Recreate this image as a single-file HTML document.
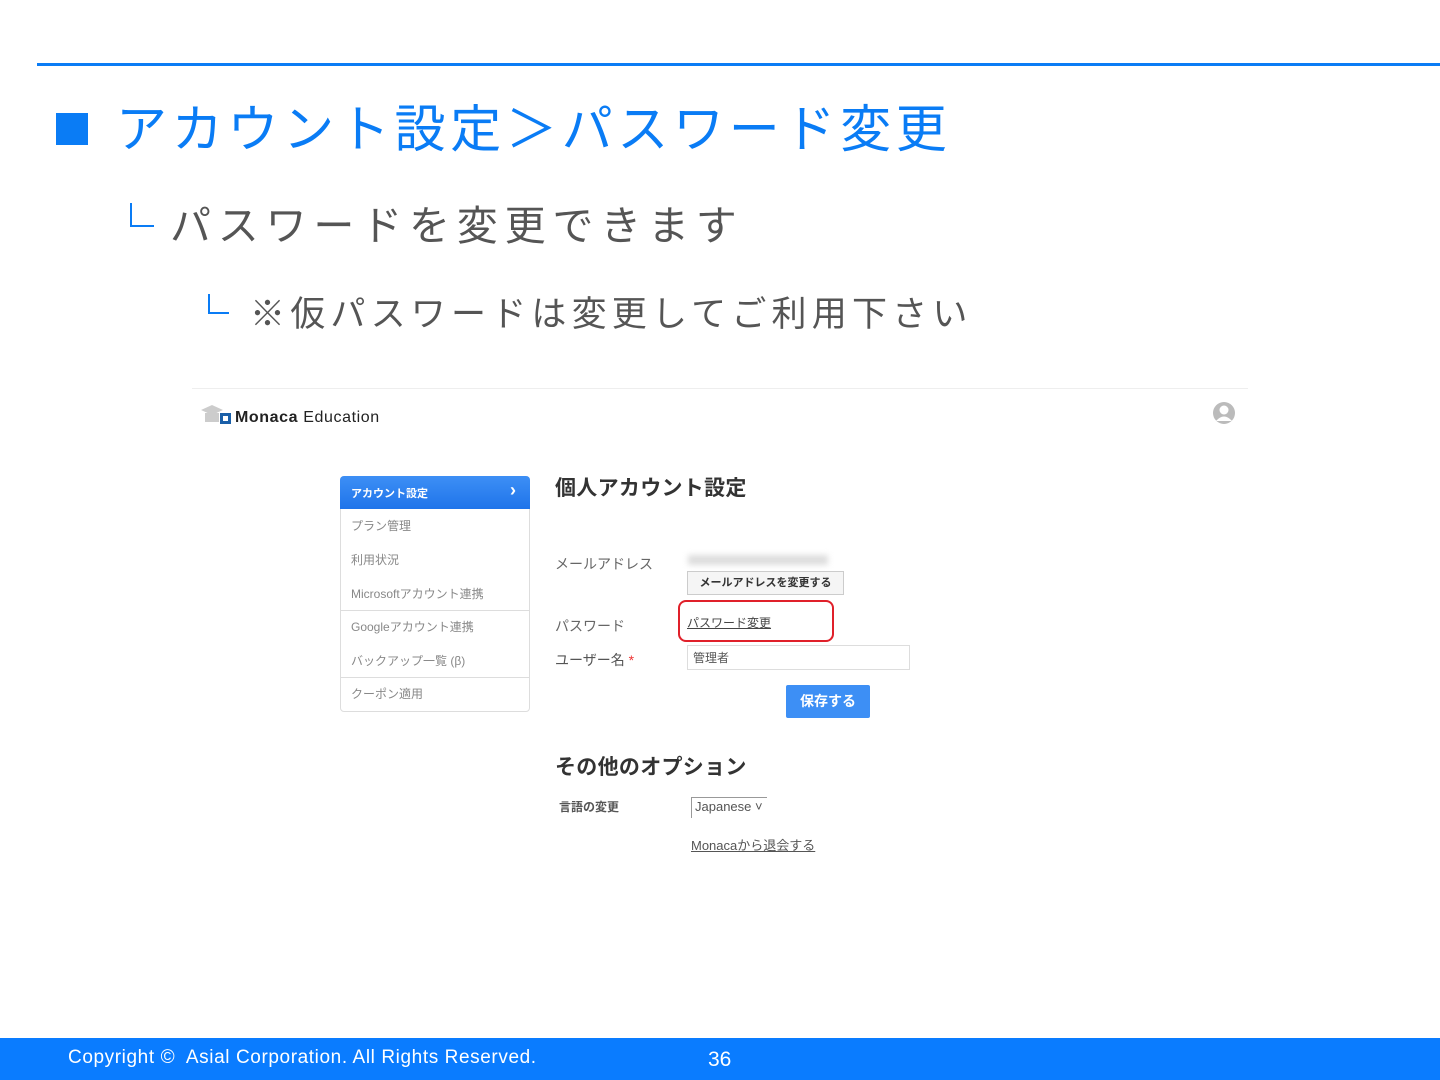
<!DOCTYPE html>
<html><head><meta charset="utf-8"><style>
*{margin:0;padding:0;box-sizing:border-box}
body{width:1440px;height:1080px;background:#fff;position:relative;overflow:hidden;font-family:"Liberation Sans","Noto Sans CJK JP",sans-serif}
.a{position:absolute;white-space:nowrap}
</style></head><body>
<div class="a" style="left:37px;top:63px;width:1403px;height:3px;background:#0a7cf5"></div>
<div class="a" style="left:56px;top:113px;width:32px;height:32px;background:#0a7cf5"></div>
<div class="a" style="left:116px;top:97px;font-size:51px;letter-spacing:4.7px;color:#0a7cf5;line-height:66px">アカウント設定＞パスワード変更</div>
<div class="a" style="left:130px;top:203px;width:24px;height:24px;border-left:2px solid #0a7cf5;border-bottom:2px solid #0a7cf5"></div>
<div class="a" style="left:170px;top:198px;font-size:41px;letter-spacing:6.8px;color:#555;line-height:56px">パスワードを変更できます</div>
<div class="a" style="left:208px;top:294px;width:21px;height:20px;border-left:2px solid #0a7cf5;border-bottom:2px solid #0a7cf5"></div>
<div class="a" style="left:250px;top:291px;font-size:35px;letter-spacing:5.2px;color:#555;line-height:48px">※仮パスワードは変更してご利用下さい</div>

<div class="a" style="left:192px;top:388px;width:1056px;height:608px;border-top:1px solid #eee"></div>
<svg class="a" style="left:200px;top:404px" width="32" height="22"><path d="M1 6 L12 1 L23 6 L12 11Z" fill="#ccc"/><rect x="5" y="9" width="14" height="9" fill="#ccc"/><rect x="20" y="9" width="11" height="11" fill="#1a5fa8"/><rect x="23" y="12" width="5" height="5" fill="#fff"/></svg>
<div class="a" style="left:235px;top:408px;font-size:16px;color:#222;line-height:20px;letter-spacing:0.6px"><b>Monaca</b> Education</div>
<svg class="a" style="left:1212px;top:401px" width="24" height="24"><circle cx="12" cy="12" r="11" fill="#bbb"/><circle cx="12" cy="9" r="4.5" fill="#fff"/><path d="M4 20 Q12 11 20 20" fill="#fff"/></svg>

<div class="a" style="left:340px;top:476px;width:190px;height:236px;border:1px solid #ddd;border-radius:4px"></div>
<div class="a" style="left:340px;top:476px;width:190px;height:33px;background:linear-gradient(#3d8ff5,#1f74ea);border-radius:4px 4px 0 0;color:#fff;font-size:11px;font-weight:bold;padding:9px 0 0 11px">アカウント設定<span style="position:absolute;right:14px;top:4px;font-size:18px">›</span></div>
<div class="a" style="left:351px;top:517px;font-size:12px;color:#888">プラン管理</div>
<div class="a" style="left:351px;top:551px;font-size:12px;color:#888">利用状況</div>
<div class="a" style="left:351px;top:585px;font-size:12px;color:#888">Microsoftアカウント連携</div>
<div class="a" style="left:341px;top:610px;width:188px;height:1px;background:#ddd"></div>
<div class="a" style="left:351px;top:618px;font-size:12px;color:#888">Googleアカウント連携</div>
<div class="a" style="left:351px;top:652px;font-size:12px;color:#888">バックアップ一覧 (β)</div>
<div class="a" style="left:341px;top:677px;width:188px;height:1px;background:#ddd"></div>
<div class="a" style="left:351px;top:685px;font-size:12px;color:#888">クーポン適用</div>

<div class="a" style="left:555px;top:472px;font-size:21px;font-weight:bold;color:#333;letter-spacing:0.3px">個人アカウント設定</div>
<div class="a" style="left:555px;top:554px;font-size:14px;color:#666">メールアドレス</div>
<div class="a" style="left:688px;top:555px;width:140px;height:10px;background:#ddd;filter:blur(3px)"></div>
<div class="a" style="left:687px;top:571px;width:157px;height:24px;border:1px solid #ccc;background:#f5f5f5;font-size:11px;font-weight:bold;color:#333;text-align:center;line-height:22px">メールアドレスを変更する</div>
<div class="a" style="left:555px;top:616px;font-size:14px;color:#666">パスワード</div>
<div class="a" style="left:678px;top:600px;width:156px;height:42px;border:2px solid #e0202a;border-radius:8px"></div>
<div class="a" style="left:687px;top:614px;font-size:12px;color:#444;text-decoration:underline">パスワード変更</div>
<div class="a" style="left:555px;top:650px;font-size:14px;color:#555">ユーザー名 <span style="color:#e33">*</span></div>
<div class="a" style="left:687px;top:645px;width:223px;height:25px;border:1px solid #ddd;font-size:12px;color:#555;padding:3px 5px">管理者</div>
<div class="a" style="left:786px;top:685px;width:84px;height:33px;background:#3d8ff5;border-radius:2px;color:#fff;font-size:14px;font-weight:bold;text-align:center;line-height:33px">保存する</div>
<div class="a" style="left:555px;top:751px;font-size:21px;font-weight:bold;color:#333;letter-spacing:0.3px">その他のオプション</div>
<div class="a" style="left:559px;top:798px;font-size:12px;font-weight:bold;color:#555">言語の変更</div>
<div class="a" style="left:691px;top:797px;width:76px;height:21px;border:1px solid #999;border-right:none;border-bottom:none;font-size:13px;color:#555;padding:1px 3px">Japanese ˅</div>
<div class="a" style="left:691px;top:835px;font-size:13px;color:#555;text-decoration:underline">Monacaから退会する</div>

<div class="a" style="left:0;top:1038px;width:1440px;height:42px;background:#0a7cff"></div>
<div class="a" style="left:68px;top:1046px;font-size:19px;letter-spacing:0.6px;color:#fff;line-height:24px">Copyright ©&nbsp; Asial Corporation. All Rights Reserved.</div>
<div class="a" style="left:708px;top:1047px;font-size:21px;color:#fff;line-height:26px">36</div>
</body></html>
